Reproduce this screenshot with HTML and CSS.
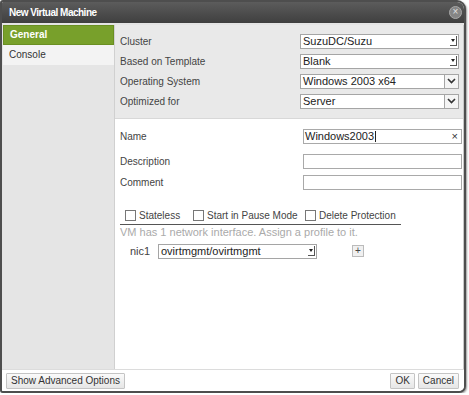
FILE: index.html
```html
<!DOCTYPE html>
<html lang="en">
<head>
    <meta charset="UTF-8">
    <title>New Virtual Machine</title>
    <link rel="stylesheet" href="styles.css">
</head>
<body>
    <div class="dialog">
        <div class="titlebar">
            <span class="title">New Virtual Machine</span>
            <span class="close">&times;</span>
        </div>
        <div class="main">
            <div class="nav">
                <div class="tab active">General</div>
                <div class="tab">Console</div>
            </div>
            <div class="content">
                <div class="top">
                    <div class="row">
                        <span class="label">Cluster</span>
                        <div class="select">SuzuDC/Suzu<span class="arrow small"></span></div>
                    </div>
                    <div class="row">
                        <span class="label">Based on Template</span>
                        <div class="select">Blank<span class="arrow small"></span></div>
                    </div>
                    <div class="row">
                        <span class="label">Operating System</span>
                        <div class="select">Windows 2003 x64<span class="arrow chevron"><svg width="9" height="6" viewBox="0 0 9 6"><path d="M1 1 L4.5 4.5 L8 1" fill="none" stroke="#333" stroke-width="1.6"/></svg></span></div>
                    </div>
                    <div class="row">
                        <span class="label">Optimized for</span>
                        <div class="select">Server<span class="arrow chevron"><svg width="9" height="6" viewBox="0 0 9 6"><path d="M1 1 L4.5 4.5 L8 1" fill="none" stroke="#333" stroke-width="1.6"/></svg></span></div>
                    </div>
                </div>
                <div class="bottom">
                    <div class="row name-row">
                        <span class="label">Name</span>
                        <div class="input">Windows2003<span class="caret"></span><span class="clear">&times;</span></div>
                    </div>
                    <div class="row desc-row">
                        <span class="label">Description</span>
                        <div class="input"></div>
                    </div>
                    <div class="row comment-row">
                        <span class="label">Comment</span>
                        <div class="input"></div>
                    </div>
                    <div class="checks">
                        <label class="check check-stateless"><span class="box"></span>Stateless</label>
                        <label class="check check-pause"><span class="box"></span>Start in Pause Mode</label>
                        <label class="check"><span class="box"></span>Delete Protection</label>
                    </div>
                    <div class="hint">VM has 1 network interface. Assign a profile to it.</div>
                    <div class="nic">
                        <span class="nic-label">nic1</span>
                        <div class="select nic-select">ovirtmgmt/ovirtmgmt<span class="arrow small"></span></div>
                        <span class="plus">+</span>
                    </div>
                </div>
            </div>
        </div>
        <div class="footer">
            <button class="btn">Show Advanced Options</button>
            <div class="actions">
                <button class="btn">OK</button>
                <button class="btn">Cancel</button>
            </div>
        </div>
    </div>
</body>
</html>
```

FILE: styles.css
```css
body {
    margin: 0;
    background-color: #fff;
    font-family: "Liberation Sans", Arial, sans-serif;
    font-size: 10px;
    color: #333;
}

.dialog {
    width: 462px;
    height: 389px;
    border: 2px solid #4e4e4e;
    border-radius: 3px 9px 7px 3px;
    box-shadow: 1px 1px 2px rgba(0, 0, 0, 0.4);
    display: flex;
    flex-direction: column;
    overflow: hidden;
    background-color: #fff;
}

.titlebar {
    height: 21px;
    background: linear-gradient(#5c5c5c, #3f3f3f);
    display: flex;
    align-items: center;
    justify-content: space-between;
    padding: 0 2px 0 7px;
    flex-shrink: 0;
}

.title {
    color: #fff;
    font-weight: bold;
    font-size: 10px;
    letter-spacing: -0.5px;
}

.close {
    width: 11px;
    height: 11px;
    border-radius: 50%;
    background-color: #858585;
    border: 1px solid #a8a8a8;
    color: #e0e0e0;
    font-size: 10px;
    line-height: 10px;
    text-align: center;
}

.main {
    flex: 1;
    display: flex;
    background-color: #e4e4e4;
    padding: 2px 0 0 1px;
    border-bottom: 1px solid #dcdcdc;
}

.nav {
    width: 111px;
    background-color: #e5e5e5;
}

.tab {
    height: 20px;
    line-height: 20px;
    padding-left: 6px;
    background-color: #f3f3f3;
    color: #333;
}

.tab.active {
    background-color: #78a02b;
    color: #fff;
    font-weight: bold;
    border: 1px solid #6a8f22;
    height: 18px;
    line-height: 18px;
}

.content {
    flex: 1;
    display: flex;
    flex-direction: column;
    border-left: 1px solid #d0d0d0;
    border-right: 1px solid #c8c8c8;
}

.top {
    background-color: #e9e9e9;
    padding: 6px 4px 7px 5px;
}

.row {
    display: flex;
    align-items: center;
    justify-content: space-between;
    height: 20px;
}

.label {
    color: #444;
    white-space: nowrap;
}

.select {
    width: 155px;
    height: 13px;
    border: 1px solid #a5a5a5;
    background-color: #fff;
    font-size: 11px;
    line-height: 13px;
    padding-left: 2px;
    display: flex;
    justify-content: space-between;
    align-items: center;
    color: #222;
}

.arrow.small {
    width: 6px;
    height: 9px;
    margin-right: 1px;
    border-right: 1px solid #555;
    border-bottom: 1px solid #555;
    position: relative;
}

.arrow.small::after {
    content: "";
    position: absolute;
    left: 1px;
    top: 3px;
    border-left: 2px solid transparent;
    border-right: 2px solid transparent;
    border-top: 3px solid #222;
}

.arrow.chevron {
    width: 13px;
    height: 13px;
    border-left: 1px solid #a5a5a5;
    display: flex;
    align-items: center;
    justify-content: center;
    background-color: #f4f4f4;
}

.bottom {
    flex: 1;
    background-color: #fff;
    padding: 7px 1px 0 5px;
    border-top: 1px solid #d8d8d8;
}

.input {
    width: 156px;
    height: 13px;
    border: 1px solid #a9a9a9;
    font-size: 11px;
    line-height: 13px;
    padding-left: 1px;
    display: flex;
    align-items: center;
    color: #222;
}

.caret {
    width: 1px;
    height: 11px;
    background-color: #222;
    margin-left: 1px;
}

.clear {
    margin-left: auto;
    margin-right: 3px;
    font-size: 11px;
    color: #333;
}

.desc-row {
    margin-top: 5px;
}

.comment-row {
    margin-top: 1px;
}

.checks {
    display: flex;
    align-items: center;
    margin-top: 15px;
    width: 276px;
    height: 17px;
    padding-left: 5px;
    border-bottom: 1px solid #555;
}

.check {
    display: flex;
    align-items: center;
    color: #444;
    white-space: nowrap;
}

.check-stateless {
    width: 68px;
}

.check-pause {
    width: 112px;
}

.box {
    width: 9px;
    height: 9px;
    border: 1px solid #777;
    margin-right: 3px;
    background-color: #fff;
}

.hint {
    color: #aaa;
    font-size: 11px;
    margin-top: 0;
    height: 14px;
    line-height: 14px;
}

.nic {
    display: flex;
    align-items: center;
    height: 20px;
    margin-top: 2px;
}

.nic-label {
    width: 28px;
    padding-left: 10px;
    color: #444;
    font-size: 11px;
}

.nic-select {
    width: 155px;
}

.plus {
    width: 10px;
    height: 10px;
    border: 1px solid #bbb;
    background-color: #f0f0f0;
    margin-left: 35px;
    font-size: 10px;
    line-height: 10px;
    text-align: center;
    color: #444;
}

.footer {
    height: 21px;
    display: flex;
    align-items: center;
    justify-content: space-between;
    padding: 0 5px 0 4px;
    background-color: #fff;
}

.actions {
    display: flex;
    gap: 3px;
}

.btn {
    font-family: "Liberation Sans", Arial, sans-serif;
    font-size: 10px;
    color: #333;
    height: 16px;
    padding: 0 4px;
    border: 1px solid #c4c4c4;
    background: linear-gradient(#fafafa, #e6e6e6);
    border-radius: 1px;
}
```
